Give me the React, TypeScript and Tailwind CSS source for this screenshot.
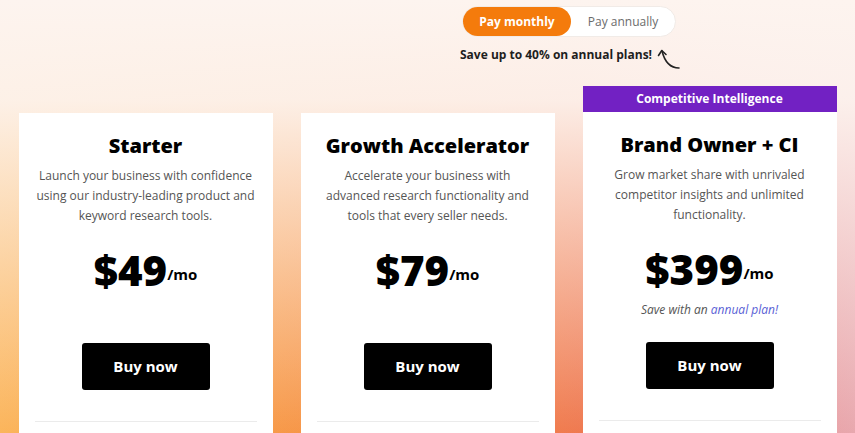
const plans = [
	{
		name: 'Starter',
		desc: ['Launch your business with confidence', 'using our industry-leading product and', 'keyword research tools.'],
		price: '$49',
		note: false,
	},
	{
		name: 'Growth Accelerator',
		desc: ['Accelerate your business with', 'advanced research functionality and', 'tools that every seller needs.'],
		price: '$79',
		note: false,
	},
	{
		name: 'Brand Owner + CI',
		desc: ['Grow market share with unrivaled', 'competitor insights and unlimited', 'functionality.'],
		price: '$399',
		note: true,
		badge: 'Competitive Intelligence',
	},
];

function CurvedArrow() {
	return (
		<svg width="26" height="24" viewBox="0 0 26 24" fill="none" stroke="#222" strokeWidth="1.6" strokeLinecap="round" strokeLinejoin="round">
			<path d="M23 21 C 15 21, 9 16, 6 4" />
			<path d="M2.5 8.5 L5.8 3.5 L10 7.5" />
		</svg>
	);
}

export default function App() {
	return (
		<div
			className="min-h-screen w-full overflow-hidden font-['Open_Sans',sans-serif] bg-[linear-gradient(to_bottom,#fdf4ef_0%,rgba(253,244,239,0.95)_22%,rgba(253,244,239,0.55)_55%,rgba(253,244,239,0)_100%),linear-gradient(to_right,#fbb152_0%,#f7963f_30%,#f47e3e_55%,#ee7247_68%,#eb8f8c_85%,#e7a3aa_100%)]"
		>
			{/* billing toggle */}
			<div className="pl-[462px] pt-[6px]">
				<div className="flex h-[31px] w-[214px] rounded-full border border-[#f1ebe7] bg-white">
					<div className="flex w-[108px] items-center justify-center rounded-full bg-[#f47b0c] text-[12px] font-bold text-white">
						Pay monthly
					</div>
					<div className="flex flex-1 items-center justify-center text-[12px] text-[#6b6b6b]">Pay annually</div>
				</div>
			</div>
			<div className="flex items-center pl-[460px] pt-[2px]">
				<span className="text-[12px] font-bold text-[#1e1e1e]">Save up to 40% on annual plans!</span>
				<span className="ml-[4px] mt-[8px]">
					<CurvedArrow />
				</span>
			</div>

			{/* plans */}
			<div className="mt-[15px] flex items-start justify-center gap-[28px]">
				{plans.map((p) => (
					<div key={p.name} className={p.badge ? 'w-[254px]' : 'mt-[27px] w-[254px]'}>
						{p.badge && (
							<div className="flex h-[26px] items-center justify-center bg-[#7221c3] text-[12px] font-bold text-white">
								{p.badge}
							</div>
						)}
						<div className="bg-white px-[16px] pb-[12px] pt-[21px] text-center">
							<h3 className="text-[20px] leading-[24px] font-extrabold text-black">{p.name}</h3>
							<p className="mt-[8px] text-[12px] leading-[20px] text-[#555]">
								{p.desc.map((l) => (
									<span key={l} className="block whitespace-nowrap">
										{l}
									</span>
								))}
							</p>
							<div className="mt-[20px] flex h-[48px] items-end justify-center">
								<span className="text-[42px] leading-[48px] font-extrabold text-black">{p.price}</span>
								<span className="mb-[9px] text-[15px] font-bold text-black">/mo</span>
							</div>
							<div className="mt-[8px] h-[18px] text-[12px] leading-[18px] italic text-[#555]">
								{p.note && (
									<>
										Save with an <span className="text-[#5a5fd6]">annual plan!</span>
									</>
								)}
							</div>
							<button className="mx-auto mt-[23px] flex h-[47px] w-[128px] items-center justify-center rounded-[3px] bg-black text-[15px] font-bold text-white">
								Buy now
							</button>
							<div className="mt-[31px] border-t border-[#ebebeb]" />
							<div className="h-[20px]" />
						</div>
					</div>
				))}
			</div>
		</div>
	);
}
